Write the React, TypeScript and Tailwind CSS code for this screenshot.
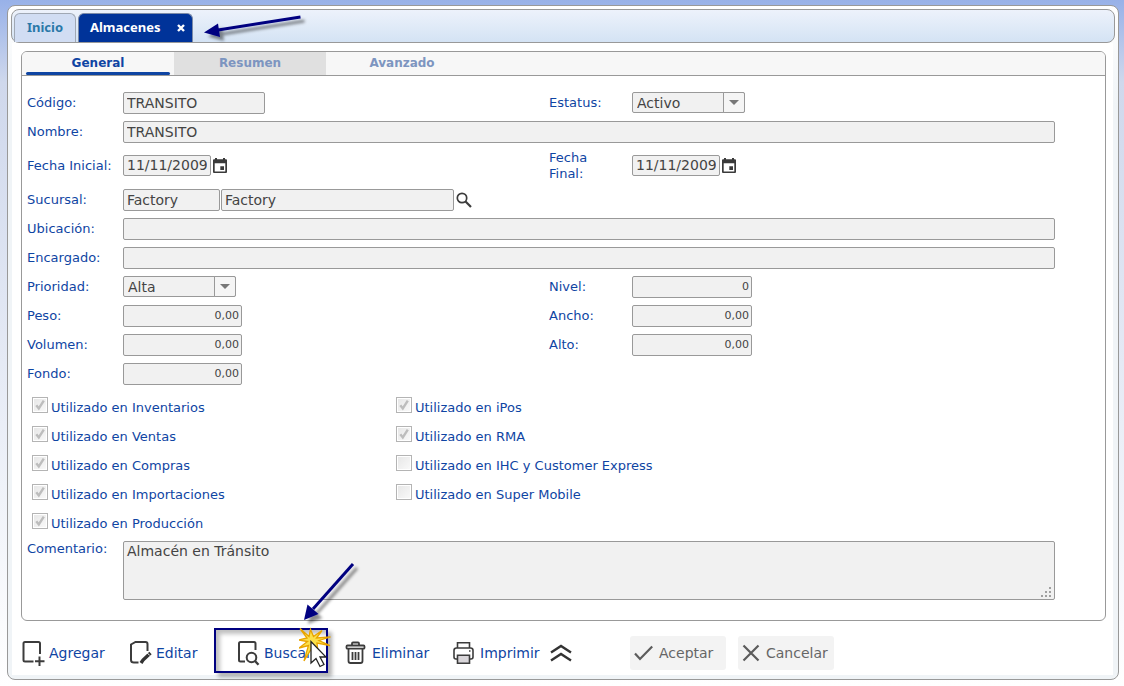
import React, { useState } from "react";

const boxClass =
  "block rounded-[2px] border border-[#999999] bg-[#f1f1f1] text-[#444444] outline-none";
const labelClass = "text-[13px] leading-4 text-[#0f45a3]";

type FieldProps = { id: string; label: string; children: React.ReactNode; wide?: boolean };

function Field({ id, label, children, wide }: FieldProps) {
  return (
    <>
      <label htmlFor={id} className={`${labelClass} self-center`}>
        {label}
      </label>
      <div className={wide ? "col-span-3 flex items-center" : "flex items-center"}>{children}</div>
    </>
  );
}

function Text({ id, value, width }: { id: string; value: string; width: string }) {
  return (
    <input
      id={id}
      type="text"
      readOnly
      defaultValue={value}
      className={`${boxClass} h-[22px] px-[3px] text-[14px] ${width}`}
    />
  );
}

function NumberBox({ id, value, width }: { id: string; value: string; width: string }) {
  return (
    <input
      id={id}
      type="text"
      readOnly
      defaultValue={value}
      className={`${boxClass} h-[22px] px-[2px] text-right text-[11px] ${width}`}
    />
  );
}

function Dropdown({ id, value }: { id: string; value: string }) {
  return (
    <div className="relative w-[113px]">
      <select
        id={id}
        defaultValue={value}
        className="block h-[21px] w-full appearance-none rounded-[2px] border border-[#999999] bg-[#f1f1f1] pl-1 text-[14px] leading-4 text-[#444444] outline-none"
      >
        <option>{value}</option>
      </select>
      <span className="pointer-events-none absolute inset-y-0 right-0 flex w-[22px] items-center justify-center rounded-r-[2px] border border-[#999999] bg-[#f5f5f5]">
        <svg width="10" height="5" viewBox="0 0 10 5">
          <path d="M0 0h10L5 5z" fill="#777777" />
        </svg>
      </span>
    </div>
  );
}

function DateField({ id, value, name }: { id: string; value: string; name: string }) {
  return (
    <>
      <input
        id={id}
        type="text"
        readOnly
        defaultValue={value}
        className={`${boxClass} h-[21px] w-[88px] px-[3px] text-[14px]`}
      />
      <button type="button" aria-label={name} className="ml-[2px]">
        <svg width="14" height="15" viewBox="0 0 14 15">
          <path
            fill="#3a3a3a"
            fillRule="evenodd"
            d="M2 0h2v1.300h6V0h2v1.300h1q1 0 1 1V14q0 1-1 1H1q-1 0-1-1V2.300q0-1 1-1h1zM1.700 5.200v8.200h10.600V5.200zM7.300 8.300H11V12H7.300z"
          />
        </svg>
      </button>
    </>
  );
}

function Check({ label, on }: { label: string; on: boolean }) {
  return (
    <label className={`${labelClass} flex h-[29px] items-center`}>
      <span className="relative mr-[3px] block size-4">
        <input
          type="checkbox"
          defaultChecked={on}
          className="peer block size-4 appearance-none border border-[#b4b4b4] bg-linear-to-br from-[#e6e6e6] to-[#fafafa] shadow-[inset_0_0_0_1px_#ffffff]"
        />
        <svg
          className="pointer-events-none absolute inset-0 hidden peer-checked:block"
          width="16"
          height="16"
          viewBox="0 0 16 16"
        >
          <path d="M4.300 8.300l2.500 3.200L11.800 3.600" fill="none" stroke="#bdbdbd" strokeWidth="2.400" />
        </svg>
      </span>
      <span className="pt-[6px]">{label}</span>
    </label>
  );
}

const svgProps = {
  fill: "none",
  stroke: "#3c3c3c",
  strokeWidth: 2,
} as const;

function AddIcon() {
  return (
    <svg width="24" height="26" viewBox="0 0 24 26" {...svgProps}>
      <path d="M18 14V3.500Q18 2 16.500 2H3Q1.500 2 1.500 3.500V20q0 1.500 1.500 1.500h8.500M17.500 16.500V26M13 21.300h9.500" />
    </svg>
  );
}

function EditIcon() {
  return (
    <svg width="24" height="26" viewBox="0 0 24 26" {...svgProps}>
      <path d="M18.500 11V4q0-2-2-2h-10L2 4.500V20q0 2.500 3 2.500h4.500" />
      <path d="M12 23l2-3 7.500-7" strokeWidth="3.400" stroke="#333333" />
      <path d="M18.300 13l2.500 2.500" stroke="#ffffff" strokeWidth="1" />
    </svg>
  );
}

function FindIcon() {
  return (
    <svg width="24" height="26" viewBox="0 0 24 26" {...svgProps}>
      <path d="M18.500 10V3.500q0-1.500-1.500-1.500H3.500Q2 2 2 3.500V20q0 1.500 1.500 1.500H8" />
      <circle cx="14.500" cy="17.500" r="4.800" />
      <path d="M18 21l3.500 3.700" strokeWidth="2.400" />
    </svg>
  );
}

function TrashIcon() {
  return (
    <svg width="22" height="24" viewBox="0 0 22 24" {...svgProps} strokeWidth="1.800">
      <path d="M7 4.500V2.500q0-1 1-1h5q1 0 1 1v2" />
      <rect x="1.500" y="4.500" width="18" height="3.200" rx="1" />
      <path d="M3.500 8v12q0 2 2 2h10q2 0 2-2V8M7.500 11v8M10.500 11v8M13.500 11v8" />
    </svg>
  );
}

function PrintIcon() {
  return (
    <svg width="22" height="24" viewBox="0 0 22 24" {...svgProps} strokeWidth="1.600">
      <path d="M4.500 7V1.800h12V7" />
      <path d="M4 18H3q-2 0-2-2V9.500Q1 7 3.500 7h14Q20 7 20 9.500V16q0 2-2 2h-1" />
      <path d="M4.500 14.200h12v8h-12z" fill="#d9d6da" />
      <path d="M16 10h1.500" />
    </svg>
  );
}

function Tool({ icon, label, width }: { icon: React.ReactNode; label: string; width: string }) {
  return (
    <button type="button" className={`flex h-[34px] items-center text-left text-[14px] text-[#0f45a3] ${width}`}>
      <span className="flex w-[27px] shrink-0 items-center">{icon}</span>
      {label}
    </button>
  );
}

function ArrowToTab() {
  return (
    <svg className="pointer-events-none absolute top-[-3px] left-[125px]" width="106" height="32" viewBox="0 0 106 32">
      <defs>
        <filter id="softTab" x="-10%" y="-30%" width="120%" height="170%">
          <feDropShadow dx="4" dy="4" stdDeviation="1.800" floodColor="#000000" floodOpacity="0.45" />
        </filter>
      </defs>
      <g filter="url(#softTab)">
        <path d="M96.500 6L14 19" stroke="#000080" strokeWidth="3" />
        <path d="M0 21.500L14 12.500l2 13.500z" fill="#000080" />
      </g>
    </svg>
  );
}

function SearchHighlight() {
  return (
    <>
      <span className="pointer-events-none absolute top-[-8px] left-[-23px] h-[45px] w-[114px] border-2 border-[#000080] shadow-[4px_4px_4px_rgba(0,0,0,0.3),inset_4px_4px_4px_rgba(0,0,0,0.25)]" />
      <svg className="pointer-events-none absolute top-[-76px] left-[62px]" width="70" height="110" viewBox="0 0 70 110">
        <defs>
          <filter id="softFind" x="-20%" y="-20%" width="150%" height="150%">
            <feDropShadow dx="4" dy="4" stdDeviation="1.800" floodColor="#000000" floodOpacity="0.45" />
          </filter>
        </defs>
        <g filter="url(#softFind)">
          <path d="M54 4L14 49" stroke="#000080" strokeWidth="3" />
          <path d="M5 60L8.500 44.500 19.500 54z" fill="#000080" />
        </g>
        <path
          d="M1 68.500L10 76.500 11.500 69.500l3 7 8.500-6-5.500 7.500 14-1-11.500 3.500 11 5-13-2.500 1 9-5-6-9 15 4.500-15.500L0 88l8.500-6.500-9-1.500 8.500-2z"
          fill="#fbe04a"
          stroke="#e9a400"
          strokeWidth="1.300"
        />
        <path
          d="M12 81.500v21.500l5-4.500 4 8 4-2-4-7.500h6z"
          fill="#ffffff"
          stroke="#222222"
          strokeWidth="1.300"
        />
      </svg>
    </>
  );
}

const leftChecks = ["Inventarios", "Ventas", "Compras", "Importaciones", "Producción"];
const rightChecks: [string, boolean][] = [
  ["iPos", true],
  ["RMA", true],
  ["IHC y Customer Express", false],
  ["Super Mobile", false],
];

export default function App() {
  const [tab, setTab] = useState("General");

  return (
    <div className="min-h-screen bg-linear-to-b from-[#98b1e8] via-[#cfd8ec] via-[12%] to-white pt-[5px] pr-[5px] pb-[6px] pl-[7px] font-['DejaVu_Sans',Verdana,sans-serif]">
      <main className="rounded-[8px] border border-[#999999] bg-linear-to-b from-white to-[#f0f4f7] to-[15%] px-[3px] pt-[3px] pb-1">
        <header className="flex h-[34px] items-end gap-[2px] rounded-[8px] border border-[#999999] bg-linear-to-b from-[#edf2fb] to-[#d4e3f4] pl-[2px] font-['Noto_Sans',sans-serif] text-[13px] font-bold">
          <button
            type="button"
            className="h-[29px] w-[62px] rounded-t-[6px] border border-b-0 border-[#a0a8b4] bg-[#d1ddf3] text-[#2a78a8]"
          >
            Inicio
          </button>
          <div className="relative flex h-[29px] w-[115px] items-center justify-between rounded-t-[6px] border border-b-0 border-[#7c8ba8] bg-[#003399] pr-[7px] pl-[11px] text-white">
            <button type="button">Almacenes</button>
            <button type="button" aria-label="Cerrar">
              <svg width="8" height="8" viewBox="0 0 8 8">
                <path d="M1 1l6 6M7 1L1 7" stroke="#ffffff" strokeWidth="2.400" />
              </svg>
            </button>
            <ArrowToTab />
          </div>
        </header>

        <div className="mr-[2px] ml-px bg-white pt-2 pr-[7px] pb-[5px] pl-[9px]">
          <section className="overflow-hidden rounded-[6px] border border-[#999999] bg-white pb-5">
            <nav className="flex h-6 border-b border-[#999999] bg-[#f7f7f7] text-[12px] font-bold">
              {["General", "Resumen", "Avanzado"].map((name) => (
                <button
                  key={name}
                  type="button"
                  onClick={() => setTab(name)}
                  className={`flex w-[152px] flex-col px-1 ${name === "Resumen" ? "bg-[#e0e0e0]" : ""} ${
                    tab === name ? "text-[#0f45a3]" : "text-[#7d95c0]"
                  }`}
                >
                  <span className="flex w-full grow items-center justify-center pt-[2px]">{name}</span>
                  <span className={`block h-[3px] w-full rounded-full ${tab === name ? "bg-[#0f45a3]" : ""}`} />
                </button>
              ))}
            </nav>

            <form className="pt-3 pr-[50px] pl-[5px]">
              <div className="grid grid-cols-[96px_426fr_83px_423fr] grid-rows-[29px_29px_39px_29px_29px_29px_29px_29px_29px_29px]">
                <Field id="codigo" label="Código:">
                  <Text id="codigo" value="TRANSITO" width="w-[142px]" />
                </Field>
                <Field id="estatus" label="Estatus:">
                  <Dropdown id="estatus" value="Activo" />
                </Field>
                <Field id="nombre" label="Nombre:" wide>
                  <Text id="nombre" value="TRANSITO" width="w-full" />
                </Field>
                <Field id="inicial" label="Fecha Inicial:">
                  <DateField id="inicial" value="11/11/2009" name="Elegir fecha inicial" />
                </Field>
                <label htmlFor="final" className={`${labelClass} w-14 self-center`}>
                  Fecha Final:
                </label>
                <div className="flex items-center">
                  <DateField id="final" value="11/11/2009" name="Elegir fecha final" />
                </div>
                <Field id="sucursal" label="Sucursal:" wide>
                  <Text id="sucursal" value="Factory" width="w-[97px]" />
                  <input
                    type="text"
                    aria-label="Nombre de sucursal"
                    readOnly
                    defaultValue="Factory"
                    className={`${boxClass} ml-px h-[22px] w-[233px] px-[3px] text-[14px]`}
                  />
                  <button type="button" aria-label="Buscar sucursal" className="ml-[2px]">
                    <svg width="16" height="16" viewBox="0 0 16 16" fill="none" stroke="#3c3c3c">
                      <circle cx="6" cy="6" r="4.700" strokeWidth="1.700" />
                      <path d="M9.300 9.300L15 15" strokeWidth="2.200" />
                    </svg>
                  </button>
                </Field>
                <Field id="ubicacion" label="Ubicación:" wide>
                  <Text id="ubicacion" value="" width="w-full" />
                </Field>
                <Field id="encargado" label="Encargado:" wide>
                  <Text id="encargado" value="" width="w-full" />
                </Field>
                <Field id="prioridad" label="Prioridad:">
                  <Dropdown id="prioridad" value="Alta" />
                </Field>
                <Field id="nivel" label="Nivel:">
                  <NumberBox id="nivel" value="0" width="w-[120px]" />
                </Field>
                <Field id="peso" label="Peso:">
                  <NumberBox id="peso" value="0,00" width="w-[119px]" />
                </Field>
                <Field id="ancho" label="Ancho:">
                  <NumberBox id="ancho" value="0,00" width="w-[120px]" />
                </Field>
                <Field id="volumen" label="Volumen:">
                  <NumberBox id="volumen" value="0,00" width="w-[119px]" />
                </Field>
                <Field id="alto" label="Alto:">
                  <NumberBox id="alto" value="0,00" width="w-[120px]" />
                </Field>
                <Field id="fondo" label="Fondo:">
                  <NumberBox id="fondo" value="0,00" width="w-[119px]" />
                </Field>
              </div>

              <div className="grid grid-cols-[364fr_659fr] pt-[2px] pl-[5px]">
                <div>
                  {leftChecks.map((name) => (
                    <Check key={name} label={`Utilizado en ${name}`} on />
                  ))}
                </div>
                <div>
                  {rightChecks.map(([name, on]) => (
                    <Check key={name} label={`Utilizado en ${name}`} on={on} />
                  ))}
                </div>
              </div>

              <div className="flex pt-[6px]">
                <label htmlFor="comentario" className={`${labelClass} w-24 shrink-0`}>
                  Comentario:
                </label>
                <div className="relative grow">
                  <textarea
                    id="comentario"
                    readOnly
                    defaultValue="Almacén en Tránsito"
                    className={`${boxClass} h-[59px] w-full resize-none px-[3px] text-[14px] leading-[18px]`}
                  />
                  <svg className="pointer-events-none absolute right-[3px] bottom-[2px]" width="11" height="11" viewBox="0 0 11 11" fill="#a0a0a0">
                    <path d="M8 0h2v2h-2zM4 4h2v2h-2zM8 4h2v2h-2zM0 8h2v2h-2zM4 8h2v2h-2zM8 8h2v2h-2z" />
                  </svg>
                </div>
              </div>
            </form>
          </section>

          <footer className="flex items-center pt-[15px] pl-px">
            <Tool icon={<AddIcon />} label="Agregar" width="w-[107px]" />
            <Tool icon={<EditIcon />} label="Editar" width="w-[108px]" />
            <div className="relative">
              <Tool icon={<FindIcon />} label="Buscar" width="w-[108px]" />
              <SearchHighlight />
            </div>
            <Tool icon={<TrashIcon />} label="Eliminar" width="w-[108px]" />
            <Tool icon={<PrintIcon />} label="Imprimir" width="w-[97px]" />
            <button type="button" aria-label="Mostrar más">
              <svg width="22" height="18" viewBox="0 0 22 18" fill="none" stroke="#333333" strokeWidth="2.400">
                <path d="M1 8.500L11 2l10 6.500M1 16.500L11 10l10 6.500" />
              </svg>
            </button>
            <button
              type="button"
              className="ml-[58px] flex h-[34px] w-24 items-center gap-[6px] rounded-[3px] bg-[#f3f3f3] pl-1 text-[14px] text-[#666666]"
            >
              <svg width="19" height="16" viewBox="0 0 19 16" fill="none" stroke="#5c5c5c" strokeWidth="2.200">
                <path d="M1 8.500l5 5.500L18.200 1.500" />
              </svg>
              Aceptar
            </button>
            <button
              type="button"
              className="ml-3 flex h-[34px] w-24 items-center gap-[6px] rounded-[3px] bg-[#f3f3f3] pl-1 text-[14px] text-[#666666]"
            >
              <svg width="18" height="18" viewBox="0 0 18 18" fill="none" stroke="#5c5c5c" strokeWidth="2.200">
                <path d="M1.500 1.500l15 15M16.500 1.500l-15 15" />
              </svg>
              Cancelar
            </button>
          </footer>
        </div>
      </main>
    </div>
  );
}
